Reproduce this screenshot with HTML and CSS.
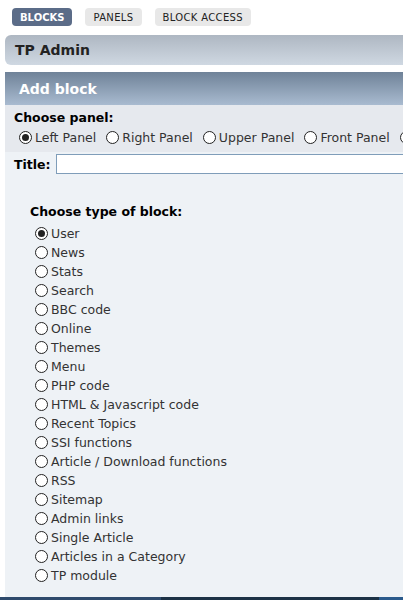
FILE: index.html
```html
<!DOCTYPE html>
<html>
<head>
<meta charset="utf-8">
<link rel="stylesheet" href="styles.css">
</head>
<body>
<div class="tabs">
  <span class="tab active">BLOCKS</span>
  <span class="tab">PANELS</span>
  <span class="tab">BLOCK ACCESS</span>
</div>
<div class="catbar">TP Admin</div>
<div class="titlebar">Add block</div>
<div class="panel">
  <div class="sec1">
    <div class="lbl">Choose panel:</div>
    <div class="panelrow">
      <label class="opt"><input type="radio" name="p" checked>Left Panel</label>
      <label class="opt"><input type="radio" name="p">Right Panel</label>
      <label class="opt"><input type="radio" name="p">Upper Panel</label>
      <label class="opt"><input type="radio" name="p">Front Panel</label>
      <label class="opt"><input type="radio" name="p">Lower Panel</label>
    </div>
  </div>
  <div class="sec2">
    <div class="titlerow"><span class="lbl">Title:</span><input class="tinput" type="text"></div>
    <div class="types">
      <div class="lbl">Choose type of block:</div>
      <div class="list">
        <label class="opt"><input type="radio" name="t" checked>User</label>
        <label class="opt"><input type="radio" name="t">News</label>
        <label class="opt"><input type="radio" name="t">Stats</label>
        <label class="opt"><input type="radio" name="t">Search</label>
        <label class="opt"><input type="radio" name="t">BBC code</label>
        <label class="opt"><input type="radio" name="t">Online</label>
        <label class="opt"><input type="radio" name="t">Themes</label>
        <label class="opt"><input type="radio" name="t">Menu</label>
        <label class="opt"><input type="radio" name="t">PHP code</label>
        <label class="opt"><input type="radio" name="t">HTML &amp; Javascript code</label>
        <label class="opt"><input type="radio" name="t">Recent Topics</label>
        <label class="opt"><input type="radio" name="t">SSI functions</label>
        <label class="opt"><input type="radio" name="t">Article / Download functions</label>
        <label class="opt"><input type="radio" name="t">RSS</label>
        <label class="opt"><input type="radio" name="t">Sitemap</label>
        <label class="opt"><input type="radio" name="t">Admin links</label>
        <label class="opt"><input type="radio" name="t">Single Article</label>
        <label class="opt"><input type="radio" name="t">Articles in a Category</label>
        <label class="opt"><input type="radio" name="t">TP module</label>
      </div>
    </div>
  </div>
</div>
<div class="footer"></div>
</body>
</html>
```
FILE: styles.css
```css
html, body {
  margin: 0;
  padding: 0;
  background: #fff;
  font-family: "DejaVu Sans", Verdana, sans-serif;
  color: #333;
  overflow: hidden;
  width: 403px;
  height: 600px;
}
.tabs {
  display: flex;
  gap: 13px;
  padding: 8px 0 0 12px;
  height: 18px;
}
.tab {
  display: flex;
  align-items: center;
  padding: 0 8px;
  height: 18px;
  border-radius: 4px;
  background: #e8e8e8;
  color: #222;
  font-size: 10px;
  letter-spacing: 0.35px;
}
.tab.active {
  background: #5b6c88;
  color: #fff;
  font-weight: bold;
  letter-spacing: 0;
}
.catbar {
  margin: 9px 0 0 5px;
  height: 30px;
  border-radius: 6px 0 0 6px;
  background: linear-gradient(#aeb7c2, #cfd8e2);
  font-weight: bold;
  font-size: 14px;
  color: #222;
  padding-left: 10px;
  display: flex;
  align-items: center;
  box-sizing: border-box;
  white-space: nowrap;
}
.titlebar {
  margin: 7px 0 0 5px;
  height: 33px;
  background: linear-gradient(#6f8298, #a9bbd0);
  color: #fff;
  font-weight: bold;
  font-size: 14px;
  padding-left: 14px;
  display: flex;
  align-items: center;
  box-sizing: border-box;
}
.panel {
  margin-left: 5px;
  height: 492px;
  background: #eef2f6;
  font-size: 12.5px;
}
.sec1 {
  background: #e6e9ee;
  padding: 5px 0 0 9px;
  height: 47px;
  box-sizing: border-box;
  overflow: hidden;
}
.lbl {
  font-weight: bold;
  color: #000;
}
.panelrow {
  display: flex;
  white-space: nowrap;
  gap: 10px;
  margin-top: 3px;
  padding-left: 5px;
}
.opt {
  display: flex;
  align-items: center;
  white-space: nowrap;
  color: #333;
  line-height: 19px;
}
input[type=radio] {
  appearance: none;
  -webkit-appearance: none;
  width: 13px;
  height: 13px;
  margin: 0 3px 0 0;
  border: 1px solid #222;
  border-radius: 50%;
  background: #fff;
  box-sizing: border-box;
  position: relative;
  flex: none;
}
input[type=radio]:checked::after {
  content: "";
  position: absolute;
  left: 2px;
  top: 2px;
  width: 7px;
  height: 7px;
  border-radius: 50%;
  background: #222;
}
.sec2 {
  padding: 2px 0 0 9px;
}
.titlerow {
  display: flex;
  align-items: center;
  gap: 5px;
}
.tinput {
  flex: 1;
  height: 20px;
  border: 1px solid #7f9db9;
  box-sizing: border-box;
  margin: 0;
  border-right: none;
}
.types {
  padding: 30px 0 0 16px;
}
.list {
  padding: 5px 0 0 5px;
}
.footer {
  height: 3px;
  margin-top: 0;
  background: linear-gradient(90deg, #2e4a6c 0 40%, #1c3246 40% 94%, #2a5a8c 94%);
}
```
